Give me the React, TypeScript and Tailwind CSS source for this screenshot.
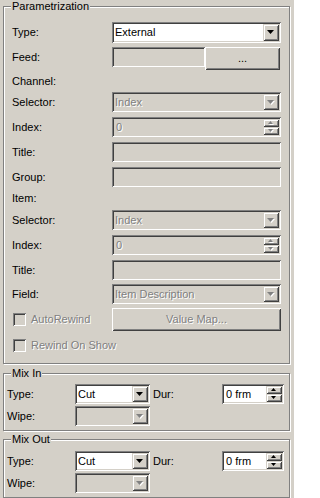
import React from 'react';

// classic 3d edges
const sunken =
  'shadow-[inset_1px_1px_0_#808080,inset_-1px_-1px_0_#ffffff,inset_2px_2px_0_#404040,inset_-2px_-2px_0_#d4d0c8]';
const raised =
  'shadow-[inset_1px_1px_0_#d4d0c8,inset_-1px_-1px_0_#404040,inset_2px_2px_0_#ffffff,inset_-2px_-2px_0_#808080]';
const button =
  'shadow-[inset_1px_1px_0_#ffffff,inset_-1px_-1px_0_#404040,inset_2px_2px_0_#d4d0c8,inset_-2px_-2px_0_#808080]';
const grayText = 'text-[#808080] [text-shadow:1px_1px_0_#ffffff]';

function Arrow({ disabled, small, up }: { disabled?: boolean; small?: boolean; up?: boolean }) {
  const w = small ? 5 : 7;
  const h = small ? 3 : 4;
  const pts = up ? `0,${h} ${w},${h} ${w / 2},0` : `0,0 ${w},0 ${w / 2},${h}`;
  return (
    <svg width={w + 1} height={h + 1} viewBox={`0 0 ${w + 1} ${h + 1}`} className="block">
      {disabled && <polygon points={pts} fill="#ffffff" transform="translate(1,1)" />}
      <polygon points={pts} fill={disabled ? '#808080' : '#000000'} />
    </svg>
  );
}

function Combo({ value, disabled, className = '' }: { value?: string; disabled?: boolean; className?: string }) {
  return (
    <div
      className={`flex h-[20px] items-stretch p-[2px] ${sunken} ${disabled ? 'bg-[#d4d0c8]' : 'bg-white'} ${className}`}
    >
      <span className={`flex-1 truncate pl-[1px] leading-[16px] ${disabled ? grayText : 'text-black'}`}>{value}</span>
      <div className={`flex w-[16px] items-center justify-center bg-[#d4d0c8] ${raised}`}>
        <Arrow disabled={disabled} />
      </div>
    </div>
  );
}

function Spin({ value, disabled, className = '' }: { value: string; disabled?: boolean; className?: string }) {
  return (
    <div
      className={`flex h-[20px] items-stretch p-[2px] ${sunken} ${disabled ? 'bg-[#d4d0c8]' : 'bg-white'} ${className}`}
    >
      <span className={`flex-1 truncate pl-[2px] leading-[16px] ${disabled ? grayText : 'text-black'}`}>{value}</span>
      <div className="flex w-[16px] flex-col">
        <div className={`flex flex-1 items-center justify-center bg-[#d4d0c8] ${raised}`}>
          <Arrow small up disabled={disabled} />
        </div>
        <div className={`flex flex-1 items-center justify-center bg-[#d4d0c8] ${raised}`}>
          <Arrow small disabled={disabled} />
        </div>
      </div>
    </div>
  );
}

function TextBox({ className = '' }: { className?: string }) {
  return <div className={`h-[20px] bg-[#d4d0c8] ${sunken} ${className}`} />;
}

function Group({ title, className = '', children }: { title: string; className?: string; children: React.ReactNode }) {
  return (
    <div
      className={`relative w-[287px] border border-[#808080] shadow-[1px_1px_0_#ffffff,inset_1px_1px_0_#ffffff] ${className}`}
    >
      <span className="absolute left-[7px] top-[-7px] bg-[#d4d0c8] px-[1px] leading-[12px] text-black">{title}</span>
      {children}
    </div>
  );
}

function Row({ label, className = '', children }: { label: string; className?: string; children?: React.ReactNode }) {
  return (
    <div className={`flex items-center ${className}`}>
      <span className="w-[100px] shrink-0 text-black">{label}</span>
      {children}
    </div>
  );
}

function Check({ label, className = '' }: { label: string; className?: string }) {
  return (
    <div className={`flex items-center ${className}`}>
      <span className={`ml-[1px] h-[13px] w-[13px] bg-[#d4d0c8] ${sunken}`} />
      <span className={`ml-[5px] ${grayText}`}>{label}</span>
    </div>
  );
}

function MixGroup({ title, className = '', pt }: { title: string; className?: string; pt: string }) {
  return (
    <Group title={title} className={`${pt} pb-[4px] pl-[3px] ${className}`}>
      <div className="flex h-[20px] items-center">
        <span className="w-[68px] shrink-0 text-black">Type:</span>
        <Combo value="Cut" className="w-[75px]" />
        <span className="ml-[3px] w-[69px] shrink-0 text-black">Dur:</span>
        <Spin value="0 frm" className="w-[62px]" />
      </div>
      <div className="mt-[2px] flex h-[20px] items-center">
        <span className="w-[68px] shrink-0 text-black">Wipe:</span>
        <Combo disabled className="w-[75px]" />
      </div>
    </Group>
  );
}

export default function App() {
  return (
    <div className="h-[498px] w-[294px] overflow-hidden bg-[#d4d0c8] pl-[3px] pt-[6px] font-['Liberation_Sans',Arial,sans-serif] text-[11px] leading-[13px]">
      <Group title="Parametrization" className="pb-[8px] pl-[8px] pr-[8px] pt-[15px]">
        <Row label="Type:" className="h-[21px]">
          <Combo value="External" className="h-[21px] flex-1" />
        </Row>
        <div className="mt-[4px] flex h-[23px] items-start">
          <span className="flex h-[20px] w-[100px] shrink-0 items-center text-black">Feed:</span>
          <TextBox className="w-[93px]" />
          <div className={`flex h-[23px] w-[75px] items-center justify-center bg-[#d4d0c8] text-black ${button}`}>
            ...
          </div>
        </div>
        <Row label="Channel:" className="h-[22px]" />
        <Row label="Selector:" className="h-[20px]">
          <Combo value="Index" disabled className="flex-1" />
        </Row>
        <Row label="Index:" className="mt-[5px] h-[20px]">
          <Spin value="0" disabled className="flex-1" />
        </Row>
        <Row label="Title:" className="mt-[5px] h-[20px]">
          <TextBox className="flex-1" />
        </Row>
        <Row label="Group:" className="mt-[5px] h-[20px]">
          <TextBox className="flex-1" />
        </Row>
        <Row label="Item:" className="h-[23px]" />
        <Row label="Selector:" className="h-[20px]">
          <Combo value="Index" disabled className="flex-1" />
        </Row>
        <Row label="Index:" className="mt-[5px] h-[20px]">
          <Spin value="0" disabled className="flex-1" />
        </Row>
        <Row label="Title:" className="mt-[5px] h-[20px]">
          <TextBox className="flex-1" />
        </Row>
        <Row label="Field:" className="mt-[4px] h-[20px]">
          <Combo value="Item Description" disabled className="flex-1" />
        </Row>
        <div className="mt-[4px] flex h-[23px] items-center">
          <Check label="AutoRewind" className="w-[100px]" />
          <div className={`flex h-[23px] flex-1 items-center justify-center bg-[#d4d0c8] ${button} ${grayText}`}>
            Value Map...
          </div>
        </div>
        <Check label="Rewind On Show" className="mt-[4px] h-[20px]" />
      </Group>
      <MixGroup title="Mix In" className="mt-[9px]" pt="pt-[10px]" />
      <MixGroup title="Mix Out" className="mt-[8px]" pt="pt-[11px]" />
    </div>
  );
}
